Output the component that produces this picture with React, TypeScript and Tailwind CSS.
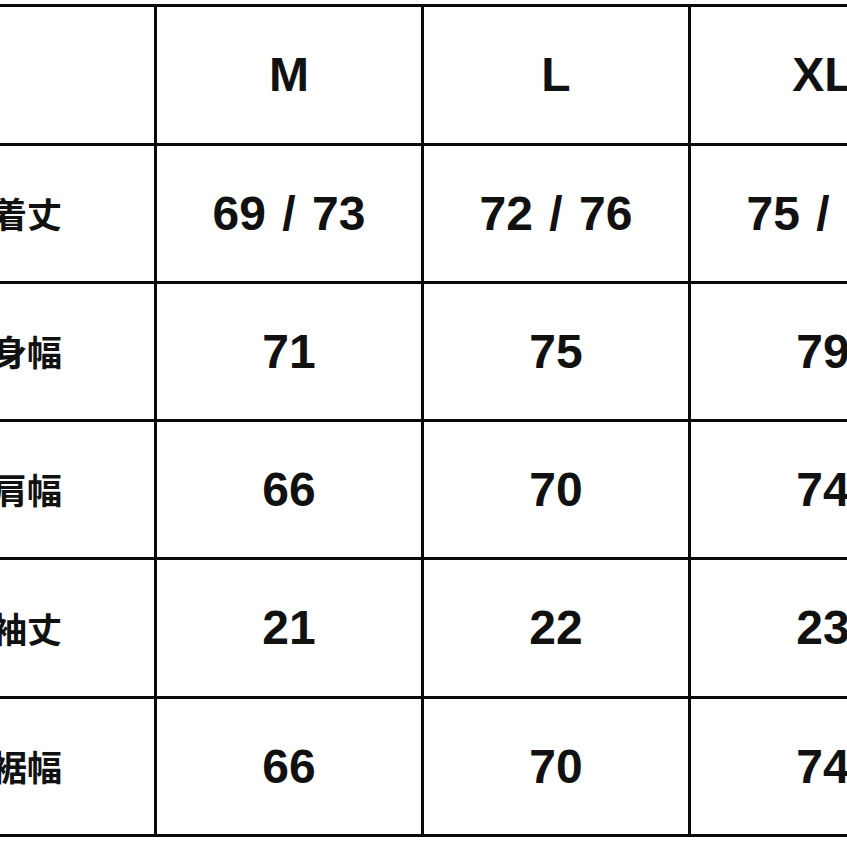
import React from "react";

const header = ["", "M", "L", "XL"];
const rows: string[][] = [
  ["着丈", "69 / 73", "72 / 76", "75 / 79"],
  ["身幅", "71", "75", "79"],
  ["肩幅", "66", "70", "74"],
  ["袖丈", "21", "22", "23"],
  ["裾幅", "66", "70", "74"],
];

export default function App() {
  const all = [header, ...rows];
  return (
    <div className="w-[847px] h-[847px] bg-white overflow-hidden pt-[4px]">
      <div className="ml-[-103px] w-max border-[3px] border-[#0a0a0a] bg-[#0a0a0a] grid grid-cols-[254px_264px_264px_264px] grid-rows-[136px_135px_135px_135px_136px_135px] gap-[3px]">
        {all.map((r, ri) =>
          r.map((c, ci) => (
            <div
              key={`${ri}-${ci}`}
              className={
                "bg-white flex items-center justify-center text-[#111] " +
                (ci === 0
                  ? "text-[35px] font-bold font-['Noto_Sans_CJK_JP','Noto_Sans',sans-serif]"
                  : "text-[48px] font-bold [word-spacing:3px] font-['Liberation_Sans',Arial,sans-serif]")
              }
            >
              {c}
            </div>
          ))
        )}
      </div>
    </div>
  );
}
